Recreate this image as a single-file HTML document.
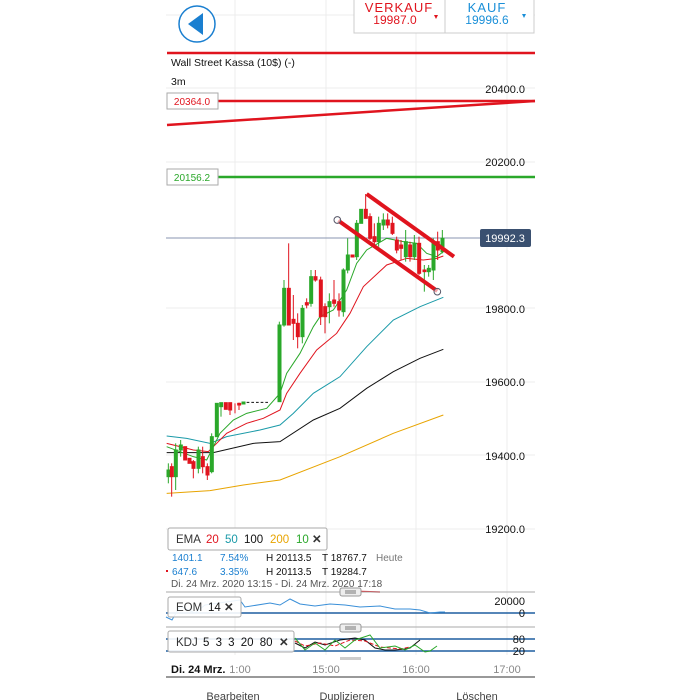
<!DOCTYPE html>
<html><head><meta charset="utf-8"><style>
body{margin:0;width:700px;height:700px;background:#fff;overflow:hidden;font-family:"Liberation Sans",sans-serif}
svg{position:absolute;left:0;top:0}
</style></head><body>
<svg width="700" height="700" viewBox="0 0 700 700" font-family="Liberation Sans, sans-serif">
<g stroke="#ececec" stroke-width="1">
<line x1="235" y1="0" x2="235" y2="655"/><line x1="326" y1="0" x2="326" y2="655"/><line x1="416" y1="0" x2="416" y2="655"/><line x1="507" y1="0" x2="507" y2="655"/>
<line x1="166" y1="15" x2="535" y2="15"/>
<line x1="166" y1="88" x2="535" y2="88"/><line x1="166" y1="162" x2="535" y2="162"/><line x1="166" y1="308" x2="535" y2="308"/><line x1="166" y1="382" x2="535" y2="382"/><line x1="166" y1="455" x2="535" y2="455"/><line x1="166" y1="529" x2="535" y2="529"/>
</g>
<circle cx="197" cy="24" r="18" fill="#fff" stroke="#1a7fd0" stroke-width="1.5"/>
<polygon points="188,24 203,13 203,35" fill="#1a7fd0"/>
<rect x="354" y="-2" width="180" height="35" fill="#fff" stroke="#ccc"/>
<line x1="445" y1="0" x2="445" y2="33" stroke="#ccc"/>
<text x="399" y="12" fill="#e0141e" font-size="13" text-anchor="middle" letter-spacing="1">VERKAUF</text>
<text x="395" y="24" fill="#e0141e" font-size="12" text-anchor="middle">19987.0</text>
<polygon points="434,15 438,15 436,19" fill="#e0141e"/>
<text x="487" y="12" fill="#1a8fd8" font-size="13" text-anchor="middle" letter-spacing="1">KAUF</text>
<text x="487" y="24" fill="#1a8fd8" font-size="12" text-anchor="middle">19996.6</text>
<polygon points="522,14 526,14 524,18" fill="#1a8fd8"/>
<line x1="167" y1="53" x2="535" y2="53" stroke="#e0141e" stroke-width="2.5"/>
<text x="171" y="66" font-size="10.5" fill="#111">Wall Street Kassa (10$) (-)</text>
<text x="171" y="85" font-size="10.5" fill="#111">3m</text>
<g font-size="11" fill="#111" text-anchor="end">
<text x="525" y="93">20400.0</text><text x="525" y="166">20200.0</text><text x="525" y="313">19800.0</text><text x="525" y="386">19600.0</text><text x="525" y="460">19400.0</text><text x="525" y="533">19200.0</text>
</g>
<line x1="218" y1="101" x2="535" y2="101" stroke="#e0141e" stroke-width="2.5"/>
<line x1="167" y1="125" x2="535" y2="101" stroke="#e0141e" stroke-width="2.5"/>
<rect x="167" y="93" width="51" height="16" fill="#fff" stroke="#aaa"/>
<text x="192" y="105" font-size="10" fill="#e0141e" text-anchor="middle">20364.0</text>
<line x1="218" y1="177" x2="535" y2="177" stroke="#2aa82a" stroke-width="2.5"/>
<rect x="167" y="169" width="51" height="16" fill="#fff" stroke="#aaa"/>
<text x="192" y="181" font-size="10" fill="#2aa82a" text-anchor="middle">20156.2</text>
<line x1="166" y1="238" x2="480" y2="238" stroke="#8896b0" stroke-width="1"/>
<rect x="480" y="229" width="51" height="18" rx="2" fill="#3a5070"/>
<text x="505" y="242" font-size="11" fill="#fff" text-anchor="middle">19992.3</text>
<g transform="translate(160,180) scale(0.33333)">
<g fill="none" stroke-width="3">
<polyline stroke="#e8a400" points="20,940 150,932 250,915 360,900 540,830 700,760 850,705"/>
<polyline stroke="#111" points="20,818 160,818 280,790 360,785 460,720 540,685 620,625 700,575 780,535 850,508"/>
<polyline stroke="#1a9aa8" points="20,768 80,775 150,790 200,770 300,750 360,735 400,700 460,640 540,590 620,500 700,420 780,380 850,352"/>
<polyline stroke="#e0141e" points="20,790 60,800 100,810 145,815 170,790 200,760 260,730 310,715 360,690 380,640 420,580 470,510 530,460 570,400 610,320 680,255 740,235 790,240 830,235 850,228"/>
<polyline stroke="#2aa82a" points="20,800 60,815 100,830 140,840 160,800 180,760 220,720 260,700 320,685 360,640 380,580 420,520 460,440 480,410 520,390 560,330 590,250 620,210 680,175 730,185 770,190 800,220 830,230 850,215"/>
<line x1="260" y1="667" x2="325" y2="667" stroke="#111" stroke-dasharray="8,6"/>
</g>
<g stroke-width="3">
<g stroke="#2aa82a" fill="#2aa82a">
<line x1="25" y1="850" x2="25" y2="910"/><rect x="21" y="870" width="9" height="20"/>
<line x1="47" y1="790" x2="47" y2="930"/><rect x="43" y="810" width="9" height="80"/>
<line x1="62" y1="780" x2="62" y2="830"/><rect x="58" y="795" width="9" height="15"/>
<line x1="115" y1="800" x2="115" y2="880"/><rect x="111" y="810" width="9" height="55"/>
<line x1="155" y1="760" x2="155" y2="880"/><rect x="151" y="770" width="9" height="105"/>
<rect x="166" y="670" width="9" height="100"/>
<line x1="183" y1="668" x2="183" y2="710"/><rect x="179" y="668" width="9" height="12"/>
<rect x="246" y="666" width="9" height="6"/>
<line x1="358" y1="425" x2="358" y2="665"/><rect x="354" y="435" width="9" height="230"/>
<line x1="372" y1="300" x2="372" y2="440"/><rect x="368" y="325" width="9" height="110"/>
<line x1="427" y1="375" x2="427" y2="490"/><rect x="423" y="385" width="9" height="85"/>
<line x1="453" y1="270" x2="453" y2="380"/><rect x="449" y="290" width="9" height="80"/>
<line x1="508" y1="340" x2="508" y2="430"/><rect x="504" y="365" width="9" height="15"/>
<line x1="550" y1="265" x2="550" y2="410"/><rect x="546" y="270" width="9" height="125"/>
<line x1="563" y1="175" x2="563" y2="280"/><rect x="559" y="225" width="9" height="45"/>
<line x1="590" y1="120" x2="590" y2="240"/><rect x="586" y="130" width="9" height="100"/>
<rect x="599" y="88" width="9" height="42"/>
<line x1="656" y1="110" x2="656" y2="200"/><rect x="652" y="130" width="9" height="55"/>
<line x1="670" y1="100" x2="670" y2="150"/><rect x="666" y="120" width="9" height="15"/>
<line x1="737" y1="150" x2="737" y2="245"/><rect x="733" y="185" width="9" height="45"/>
<line x1="763" y1="165" x2="763" y2="240"/><rect x="759" y="190" width="9" height="40"/>
<line x1="793" y1="255" x2="793" y2="335"/>
<line x1="806" y1="255" x2="806" y2="290"/><rect x="802" y="265" width="9" height="10"/>
<line x1="820" y1="175" x2="820" y2="300"/><rect x="816" y="185" width="9" height="85"/>
<line x1="847" y1="150" x2="847" y2="220"/><rect x="843" y="175" width="9" height="40"/>
</g>
<g stroke="#e0141e" fill="#e0141e">
<line x1="35" y1="850" x2="35" y2="950"/><rect x="31" y="860" width="9" height="30"/>
<rect x="71" y="800" width="9" height="40"/>
<rect x="84" y="835" width="9" height="15"/>
<line x1="100" y1="840" x2="100" y2="895"/><rect x="96" y="845" width="9" height="20"/>
<line x1="128" y1="800" x2="128" y2="880"/><rect x="124" y="830" width="9" height="30"/>
<line x1="142" y1="850" x2="142" y2="900"/><rect x="138" y="860" width="9" height="25"/>
<rect x="193" y="668" width="9" height="20"/>
<line x1="210" y1="668" x2="210" y2="705"/><rect x="206" y="668" width="9" height="22"/>
<line x1="225" y1="670" x2="225" y2="700"/>
<line x1="237" y1="668" x2="237" y2="690"/><rect x="233" y="670" width="9" height="5"/>
<line x1="386" y1="190" x2="386" y2="435"/><rect x="382" y="325" width="9" height="110"/>
<line x1="400" y1="345" x2="400" y2="480"/><rect x="396" y="418" width="9" height="12"/>
<line x1="413" y1="400" x2="413" y2="505"/><rect x="409" y="430" width="9" height="40"/>
<line x1="440" y1="355" x2="440" y2="385"/><rect x="436" y="368" width="9" height="7"/>
<line x1="466" y1="270" x2="466" y2="305"/><rect x="462" y="290" width="9" height="10"/>
<line x1="482" y1="290" x2="482" y2="435"/><rect x="478" y="300" width="9" height="110"/>
<line x1="495" y1="370" x2="495" y2="460"/><rect x="491" y="380" width="9" height="30"/>
<line x1="522" y1="300" x2="522" y2="380"/><rect x="518" y="360" width="9" height="10"/>
<line x1="537" y1="340" x2="537" y2="410"/><rect x="533" y="365" width="9" height="25"/>
<rect x="573" y="225" width="9" height="6"/>
<line x1="617" y1="42" x2="617" y2="115"/><rect x="613" y="88" width="9" height="27"/>
<line x1="630" y1="100" x2="630" y2="180"/><rect x="626" y="110" width="9" height="65"/>
<line x1="643" y1="130" x2="643" y2="195"/><rect x="639" y="170" width="9" height="15"/>
<line x1="683" y1="100" x2="683" y2="145"/><rect x="679" y="120" width="9" height="15"/>
<line x1="697" y1="110" x2="697" y2="165"/><rect x="693" y="130" width="9" height="30"/>
<line x1="710" y1="170" x2="710" y2="220"/><rect x="706" y="180" width="9" height="30"/>
<line x1="723" y1="180" x2="723" y2="240"/><rect x="719" y="195" width="9" height="10"/>
<line x1="750" y1="185" x2="750" y2="245"/><rect x="746" y="195" width="9" height="35"/>
<line x1="777" y1="170" x2="777" y2="285"/><rect x="773" y="190" width="9" height="90"/>
<rect x="789" y="270" width="9" height="5"/>
<line x1="833" y1="155" x2="833" y2="240"/><rect x="829" y="185" width="9" height="25"/>
</g>
</g>
<line x1="620" y1="42" x2="882" y2="230" stroke="#e0141e" stroke-width="12"/>
<line x1="535" y1="122" x2="832" y2="333" stroke="#e0141e" stroke-width="12"/>
<circle cx="532" cy="120" r="10" fill="#fff" fill-opacity="0.6" stroke="#556" stroke-width="3"/>
<circle cx="832" cy="335" r="10" fill="#fff" fill-opacity="0.6" stroke="#556" stroke-width="3"/>
</g>
<rect x="168" y="528" width="159" height="22" rx="2" fill="#fff" stroke="#aaa"/>
<g font-size="11.5">
<text x="176" y="543" fill="#333">EMA</text><text x="206" y="543" fill="#e0141e">20</text><text x="225" y="543" fill="#1a9aa8">50</text><text x="244" y="543" fill="#111">100</text><text x="270" y="543" fill="#e8a400">200</text><text x="296" y="543" fill="#2aa82a">10</text><text x="312" y="543" fill="#333" font-weight="bold">✕</text>
</g>
<g font-size="10">
<text x="172" y="561" fill="#1a7fd0">1401.1</text><text x="220" y="561" fill="#1a7fd0">7.54%</text><text x="266" y="561" fill="#111">H 20113.5</text><text x="322" y="561" fill="#111">T 18767.7</text><text x="376" y="561" fill="#777">Heute</text>
<text x="172" y="575" fill="#1a7fd0">647.6</text><text x="220" y="575" fill="#1a7fd0">3.35%</text><text x="266" y="575" fill="#111">H 20113.5</text><text x="322" y="575" fill="#111">T 19284.7</text>
<text x="171" y="587" fill="#555">Di. 24 Mrz. 2020 13:15 - Di. 24 Mrz. 2020 17:18</text>
</g>
<rect x="166" y="570" width="2" height="2" fill="#e0141e"/>
<line x1="340" y1="591" x2="380" y2="592" stroke="#e0141e" stroke-width="1.5"/>
<line x1="166" y1="592" x2="535" y2="592" stroke="#aaa"/>
<rect x="340" y="588" width="21" height="8" rx="2" fill="#eee" stroke="#999"/>
<line x1="345" y1="591" x2="356" y2="591" stroke="#777"/><line x1="345" y1="593" x2="356" y2="593" stroke="#777"/>
<line x1="166" y1="613" x2="535" y2="613" stroke="#1f5fa0" stroke-width="1.5"/>
<polyline fill="none" stroke="#3a8fd8" stroke-width="1" points="166,617 172,620 180,606 195,613 205,605 240,600 245,607 270,603 280,605 290,599 300,604 315,606 330,604 345,605 360,607 380,606 395,609 410,609 420,610 430,613 440,612 445,612"/>
<rect x="168" y="597" width="73" height="20" rx="2" fill="#fff" fill-opacity="0.9" stroke="#aaa"/>
<text x="176" y="611" font-size="11.5" fill="#333">EOM</text><text x="208" y="611" font-size="11.5" fill="#111">14</text><text x="224" y="611" font-size="11.5" fill="#333" font-weight="bold">✕</text>
<text x="525" y="605" font-size="11" fill="#111" text-anchor="end">20000</text>
<text x="525" y="617" font-size="11" fill="#111" text-anchor="end">0</text>
<line x1="166" y1="627" x2="535" y2="627" stroke="#aaa"/>
<rect x="340" y="624" width="21" height="8" rx="2" fill="#eee" stroke="#999"/>
<line x1="345" y1="627" x2="356" y2="627" stroke="#777"/><line x1="345" y1="629" x2="356" y2="629" stroke="#777"/>
<line x1="166" y1="639" x2="535" y2="639" stroke="#1f5fa0" stroke-width="1.5"/>
<line x1="166" y1="651" x2="535" y2="651" stroke="#1f5fa0" stroke-width="1.5"/>
<polyline fill="none" stroke="#111" points="295,643 305,648 315,642 325,645 340,640 355,638 365,640 375,648 385,650 395,650 405,649 410,648 420,640"/>
<polyline fill="none" stroke="#e0141e" stroke-dasharray="4,2" points="295,641 305,646 320,643 335,646 350,640 365,641 380,647 400,649 410,647"/>
<polyline fill="none" stroke="#2aa82a" points="295,638 305,650 315,643 325,650 335,640 345,648 355,640 370,635 380,648 395,646 405,650 415,645 425,652 430,651 437,646"/>
<rect x="168" y="631" width="126" height="21" rx="2" fill="#fff" fill-opacity="0.9" stroke="#aaa"/>
<text x="176" y="646" font-size="11.5" fill="#333">KDJ</text><text x="203" y="646" font-size="11.5" fill="#111" word-spacing="3">5 3 3 20 80</text><text x="279" y="646" font-size="11.5" fill="#333" font-weight="bold">✕</text>
<text x="525" y="643" font-size="11" fill="#111" text-anchor="end">80</text>
<text x="525" y="655" font-size="11" fill="#111" text-anchor="end">20</text>
<rect x="340" y="657" width="21" height="3" fill="#ccc"/>
<text x="171" y="673" font-size="11" fill="#111" font-weight="bold">Di. 24 Mrz.</text>
<g font-size="11" fill="#888" text-anchor="middle"><text x="240" y="673">1:00</text><text x="326" y="673">15:00</text><text x="416" y="673">16:00</text><text x="507" y="673">17:00</text></g>
<line x1="166" y1="677" x2="535" y2="677" stroke="#333" stroke-width="1"/>
<g font-size="11" fill="#444" text-anchor="middle"><text x="233" y="700">Bearbeiten</text><text x="347" y="700">Duplizieren</text><text x="477" y="700">Löschen</text></g>
</svg>
</body></html>
